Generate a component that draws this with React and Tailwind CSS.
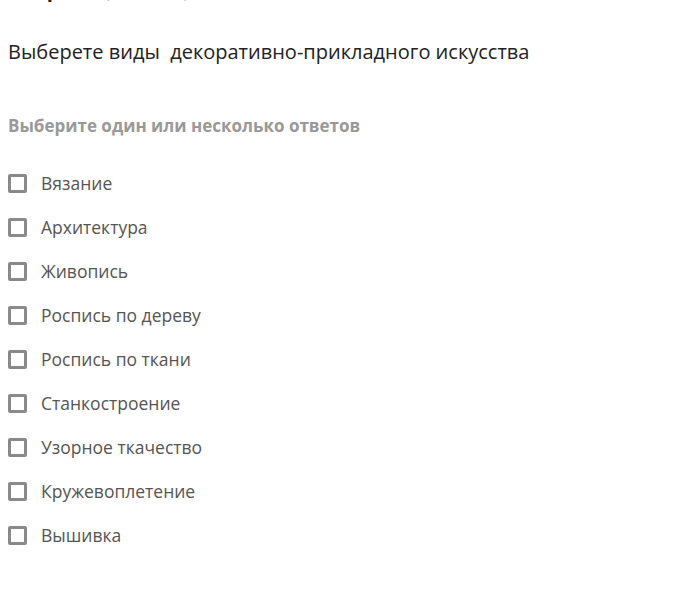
export default function App() {
  const items = [
    "Вязание",
    "Архитектура",
    "Живопись",
    "Роспись по дереву",
    "Роспись по ткани",
    "Станкостроение",
    "Узорное ткачество",
    "Кружевоплетение",
    "Вышивка",
  ];
  return (
    <div className="w-[680px] h-[611px] bg-white overflow-hidden" style={{ fontFamily: '"Open Sans", sans-serif' }}>
      <div className="px-2">
        <div className="mt-[-23px] h-[26px] text-[20px] leading-[26px]">
          <span className="font-bold text-[#222]">Вопрос 1</span>{" "}
          <span className="text-[#999]">(3 балла)</span>
        </div>
        <div className="mt-[35px] text-[20px] leading-[28px] text-[#222] whitespace-pre">
          {"Выберете виды  декоративно-прикладного искусства"}
        </div>
        <div className="mt-[49px] text-[17px] leading-[22px] font-bold text-[#999]">
          Выберите один или несколько ответов
        </div>
        <div className="mt-[33px] flex flex-col gap-[18px]">
          {items.map((t) => (
            <label key={t} className="flex items-center h-[26px]">
              <span className="w-[19px] h-[19px] border-[3px] border-[#8a8a8a] rounded-[2px] shrink-0" />
              <span className="ml-[14px] text-[17.5px] leading-[26px] text-[#555]">{t}</span>
            </label>
          ))}
        </div>
      </div>
    </div>
  );
}
